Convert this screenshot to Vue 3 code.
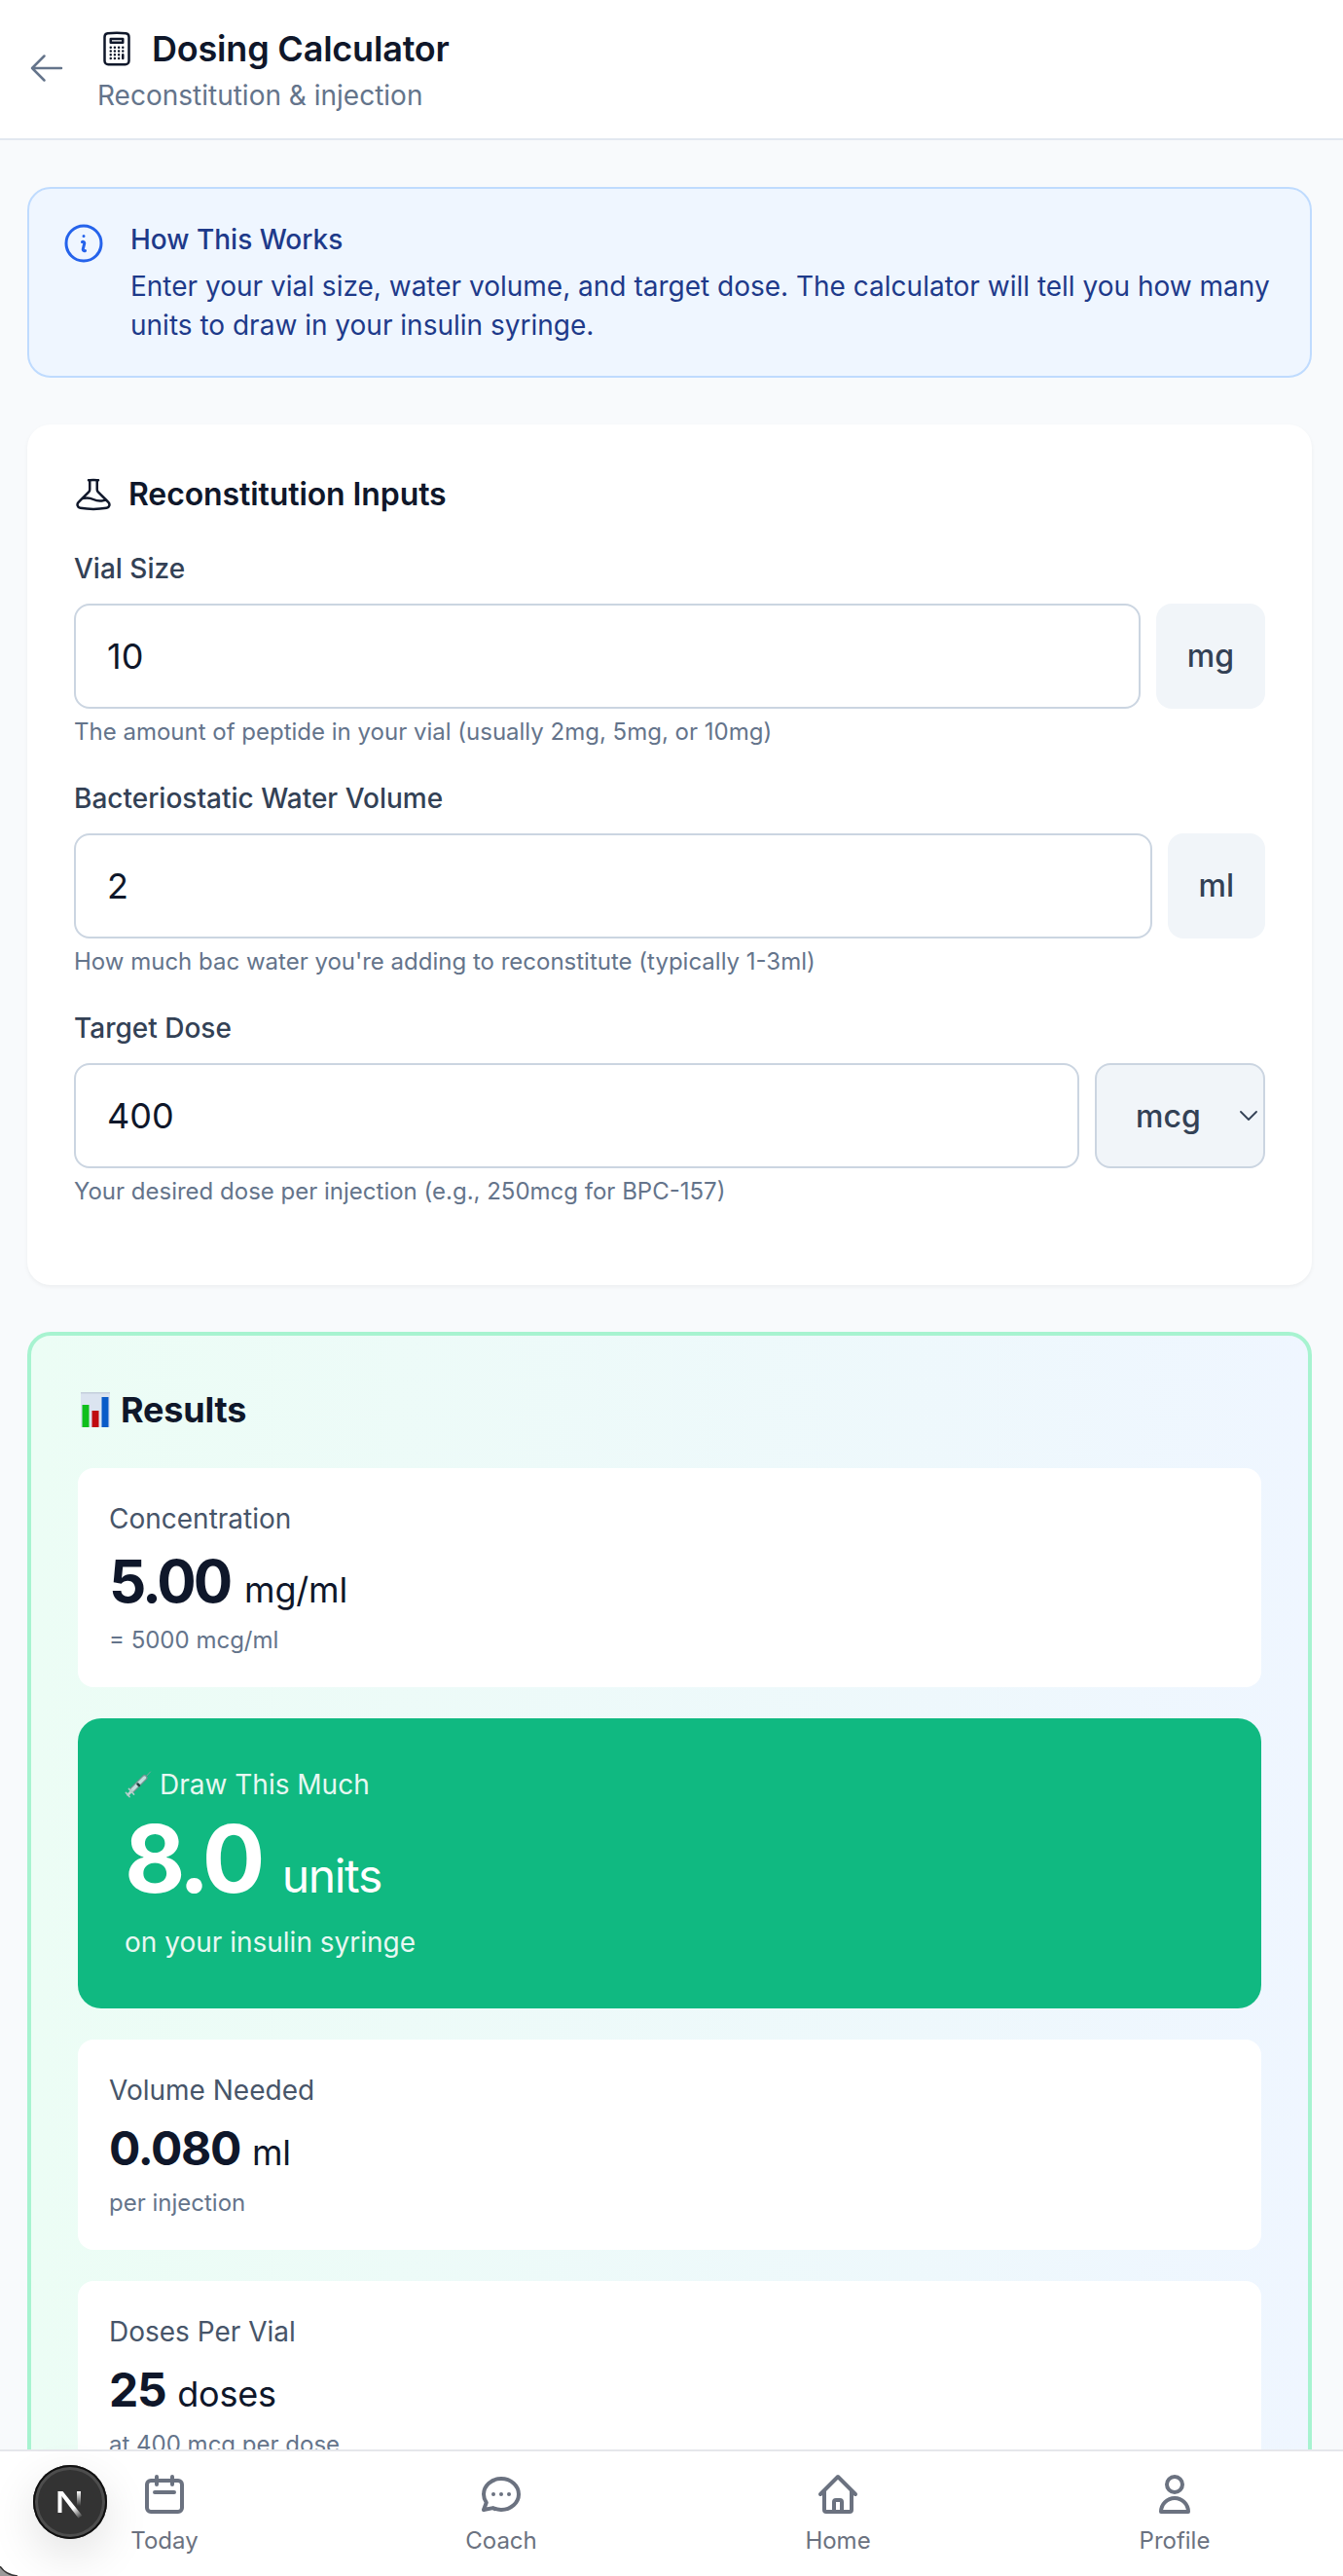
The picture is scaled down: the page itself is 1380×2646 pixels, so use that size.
<template>
  <div class="page">
    <header class="header">
      <button class="back" type="button" aria-label="Back">
        <svg class="icon-md" viewBox="0 0 24 24" stroke-width="1.5" aria-hidden="true">
          <path d="M10.5 19.5 3 12m0 0 7.5-7.5M3 12h18" />
        </svg>
      </button>
      <div>
        <h1 class="title">
          <svg class="icon-md" viewBox="0 0 24 24" stroke-width="1.5" aria-hidden="true">
            <path
              d="M15.75 15.75V18m-7.5-6.75h.008v.008H8.25v-.008Zm0 2.25h.008v.008H8.25V13.5Zm0 2.25h.008v.008H8.25v-.008Zm0 2.25h.008v.008H8.25V18Zm2.498-6.75h.007v.008h-.007v-.008Zm0 2.25h.007v.008h-.007V13.5Zm0 2.25h.007v.008h-.007v-.008Zm0 2.25h.007v.008h-.007V18Zm2.504-6.75h.008v.008h-.008v-.008Zm0 2.25h.008v.008h-.008V13.5Zm0 2.25h.008v.008h-.008v-.008Zm0 2.25h.008v.008h-.008V18Zm2.498-6.75h.008v.008h-.008v-.008Zm0 2.25h.008v.008h-.008V13.5ZM8.25 6h7.5v2.25h-7.5V6ZM12 2.25c-1.892 0-3.758.11-5.593.322C5.307 2.7 4.5 3.65 4.5 4.757V19.5a2.25 2.25 0 0 0 2.25 2.25h10.5a2.25 2.25 0 0 0 2.25-2.25V4.757c0-1.108-.806-2.057-1.907-2.185A48.507 48.507 0 0 0 12 2.25Z"
            />
          </svg>
          <span>Dosing Calculator</span>
        </h1>
        <p class="subtitle">Reconstitution &amp; injection</p>
      </div>
    </header>

    <main class="content">
      <section class="info">
        <svg class="icon-lg" viewBox="0 0 24 24" stroke-width="1.5" aria-hidden="true">
          <path
            d="m11.25 11.25.041-.02a.75.75 0 0 1 1.063.852l-.708 2.836a.75.75 0 0 0 1.063.853l.041-.021M21 12a9 9 0 1 1-18 0 9 9 0 0 1 18 0Zm-9-3.75h.008v.008H12V8.25Z"
          />
        </svg>
        <div>
          <p class="info-title">How This Works</p>
          <p class="info-text">
            Enter your vial size, water volume, and target dose. The calculator will tell you how
            many units to draw in your insulin syringe.
          </p>
        </div>
      </section>

      <section class="card">
        <h2 class="card-title">
          <svg class="icon-md" viewBox="0 0 24 24" stroke-width="1.5" aria-hidden="true">
            <path
              d="M9.75 3.104v5.714a2.25 2.25 0 0 1-.659 1.591L5 14.5M9.75 3.104c-.251.023-.501.05-.75.082m.75-.082a24.301 24.301 0 0 1 4.5 0m0 0v5.714c0 .597.237 1.17.659 1.591L19.8 15.3M14.25 3.104c.251.023.501.05.75.082M19.8 15.3l-1.57.393A9.065 9.065 0 0 1 12 15a9.065 9.065 0 0 0-6.23-.693L5 14.5m14.8.8 1.402 1.402c1.232 1.232.65 3.318-1.067 3.611A48.309 48.309 0 0 1 12 21c-2.773 0-5.491-.235-8.135-.687-1.718-.293-2.3-2.379-1.067-3.61L5 14.5"
            />
          </svg>
          <span>Reconstitution Inputs</span>
        </h2>

        <div class="field">
          <label class="label" for="vial">Vial Size</label>
          <div class="row">
            <input id="vial" v-model="vialMg" class="input" type="text" inputmode="decimal" />
            <span class="unit">mg</span>
          </div>
          <p class="hint">The amount of peptide in your vial (usually 2mg, 5mg, or 10mg)</p>
        </div>

        <div class="field">
          <label class="label" for="water">Bacteriostatic Water Volume</label>
          <div class="row">
            <input id="water" v-model="waterMl" class="input" type="text" inputmode="decimal" />
            <span class="unit">ml</span>
          </div>
          <p class="hint">How much bac water you're adding to reconstitute (typically 1-3ml)</p>
        </div>

        <div class="field">
          <label class="label" for="dose">Target Dose</label>
          <div class="row">
            <input id="dose" v-model="dose" class="input" type="text" inputmode="decimal" />
            <button class="unit unit-select" type="button" @click="toggleUnit">
              <span>{{ doseUnit }}</span>
              <svg class="chevron" viewBox="0 0 18 10" stroke-width="1.8" aria-hidden="true">
                <path d="M1 1l8 8 8-8" />
              </svg>
            </button>
          </div>
          <p class="hint">Your desired dose per injection (e.g., 250mcg for BPC-157)</p>
        </div>
      </section>

      <section class="results">
        <h2 class="results-title">
          <svg class="chart" viewBox="0 0 30 36" aria-hidden="true">
            <rect width="30" height="36" fill="#dbe4f0" />
            <rect width="30" height="1.5" fill="#c3cedb" />
            <rect x="1.5" y="13" width="7" height="23" fill="#0fbf1c" />
            <rect x="11.5" y="19" width="7" height="17" fill="#c00a10" />
            <rect x="21.5" y="5" width="7" height="31" fill="#0a5bc8" />
          </svg>
          <span>Results</span>
        </h2>

        <div class="result">
          <p class="result-label">Concentration</p>
          <p class="value value-lg">
            <span class="number">{{ concentration.toFixed(2) }}</span>
            <span class="value-unit"> mg/ml</span>
          </p>
          <p class="hint">= {{ (concentration * 1000).toFixed(0) }} mcg/ml</p>
        </div>

        <div class="draw">
          <p class="draw-label">
            <svg class="syringe" viewBox="0 0 28 28" aria-hidden="true">
              <path d="M19 9l7.500-8" stroke="#8fa3a6" stroke-width="1" />
              <path d="M8 19.500L20.500 7" stroke="#7c9095" stroke-width="6" />
              <path d="M8 19.500L20.500 7" stroke="#d5e4e8" stroke-width="3.500" />
              <path d="M13.500 13.500l1.500 1.500" stroke="#26383c" stroke-width="2.500" />
              <path d="M3.500 24.500L8 20" stroke="#cfd8da" stroke-width="2.500" />
              <path d="M1.500 22.500l3.500 4M4.500 18.500l5 5.500" stroke="#c3ced0" stroke-width="1.800" />
            </svg>
            <span>Draw This Much</span>
          </p>
          <p class="draw-value">
            <span class="number">{{ units.toFixed(1) }}</span>
            <span class="draw-unit"> units</span>
          </p>
          <p class="draw-note">on your insulin syringe</p>
        </div>

        <div class="result">
          <p class="result-label">Volume Needed</p>
          <p class="value">
            <span class="number">{{ volume.toFixed(3) }}</span>
            <span class="value-unit"> ml</span>
          </p>
          <p class="hint">per injection</p>
        </div>

        <div class="result">
          <p class="result-label">Doses Per Vial</p>
          <p class="value">
            <span class="number">{{ dosesPerVial }}</span>
            <span class="value-unit"> doses</span>
          </p>
          <p class="hint">at {{ dose }} {{ doseUnit }} per dose</p>
        </div>
      </section>
    </main>

    <nav class="nav">
      <a v-for="tab in tabs" :key="tab.name" class="tab" href="#">
        <svg class="icon-lg" viewBox="0 0 24 24" stroke-width="2" aria-hidden="true">
          <path :d="tab.icon" />
        </svg>
        <span>{{ tab.name }}</span>
      </a>
    </nav>

    <!-- Dev tools badge -->
    <div class="badge">
      <svg viewBox="0 0 76 76" aria-hidden="true">
        <defs>
          <linearGradient id="fadeDiag" gradientUnits="userSpaceOnUse" x1="42" y1="44" x2="50" y2="54">
            <stop stop-color="#fff" />
            <stop offset="1" stop-color="#fff" stop-opacity="0" />
          </linearGradient>
          <linearGradient id="fadeBar" gradientUnits="userSpaceOnUse" x1="47" y1="27" x2="47" y2="42">
            <stop stop-color="#fff" />
            <stop offset="1" stop-color="#fff" stop-opacity="0" />
          </linearGradient>
        </defs>
        <rect x="25.500" y="27" width="4" height="22" fill="#fff" />
        <polygon points="25.5,27 30.5,27 50.500,52 46.500,54.500" fill="url(#fadeDiag)" />
        <rect x="45" y="27" width="4" height="15" fill="url(#fadeBar)" />
      </svg>
    </div>

    <svg class="corner" viewBox="0 0 18 10" aria-hidden="true">
      <path class="corner-fill" d="M0 0Q6 9 18 10H0Z" />
      <path d="M0 0Q6 9 18 10" stroke="#333" stroke-width="1.500" />
    </svg>
  </div>
</template>

<script setup>
import { computed, ref } from "vue";

const vialMg = ref("10");
const waterMl = ref("2");
const dose = ref("400");
const doseUnit = ref("mcg");

const doseMg = computed(() =>
  doseUnit.value === "mcg" ? Number(dose.value) / 1000 : Number(dose.value)
);
const concentration = computed(() => Number(vialMg.value) / Number(waterMl.value));
const volume = computed(() => doseMg.value / concentration.value);
// U-100 syringe: 100 units per ml
const units = computed(() => volume.value * 100);
const dosesPerVial = computed(() => Math.round(Number(vialMg.value) / doseMg.value));

function toggleUnit() {
  doseUnit.value = doseUnit.value === "mcg" ? "mg" : "mcg";
}

const tabs = [
  {
    name: "Today",
    icon: "M8 7V3m8 4V3m-9 8h10M5 21h14a2 2 0 002-2V7a2 2 0 00-2-2H5a2 2 0 00-2 2v12a2 2 0 002 2z",
  },
  {
    name: "Coach",
    icon: "M8 12h.01M12 12h.01M16 12h.01M21 12c0 4.418-4.03 8-9 8a9.863 9.863 0 01-4.255-.949L3 20l1.395-3.72C3.512 15.042 3 13.574 3 12c0-4.418 4.03-8 9-8s9 3.582 9 8z",
  },
  {
    name: "Home",
    icon: "M3 12l2-2m0 0l7-7 7 7M5 10v10a1 1 0 001 1h3m10-11l2 2m-2-2v10a1 1 0 01-1 1h-3m-6 0a1 1 0 001-1v-4a1 1 0 011-1h2a1 1 0 011 1v4a1 1 0 001 1m-6 0h6",
  },
  {
    name: "Profile",
    icon: "M16 7a4 4 0 11-8 0 4 4 0 018 0zM12 14a7 7 0 00-7 7h14a7 7 0 00-7-7z",
  },
];
</script>

<style>
body {
  background: #f8fafc;
}
</style>

<style scoped>
* {
  box-sizing: border-box;
}

.page {
  position: relative;
  display: flex;
  flex-direction: column;
  height: 2646px;
  overflow: hidden;
  background: #f8fafc;
  color: #0f172a;
  font-family: Inter, "Liberation Sans", sans-serif;
  font-size: 28px;
  line-height: 40px;
}

h1,
h2,
p {
  margin: 0;
}

button,
input {
  font-family: inherit;
}

svg {
  display: block;
  flex-shrink: 0;
}

svg path {
  fill: none;
  stroke-linecap: round;
  stroke-linejoin: round;
}

.icon-md,
.icon-lg,
.chevron {
  stroke: currentColor;
}

.icon-md {
  width: 40px;
  height: 40px;
}

.icon-lg {
  width: 48px;
  height: 48px;
}

.header {
  display: flex;
  flex-shrink: 0;
  align-items: center;
  gap: 32px;
  height: 144px;
  padding: 0 28px 2px;
  background: #fff;
  border-bottom: 2px solid #e2e8f0;
}

.back {
  padding: 0;
  color: #64748b;
  background: none;
  border: 0;
}

.title {
  display: flex;
  align-items: center;
  gap: 16px;
  font-size: 36px;
  font-weight: 600;
  line-height: 56px;
  letter-spacing: -0.2px;
}

.subtitle {
  color: #64748b;
}

.content {
  flex: 1;
  min-height: 0;
  padding: 48px 32px 0 28px;
  overflow: hidden;
}

.info {
  display: flex;
  gap: 24px;
  padding: 32px;
  color: #1e3a8a;
  background: #eff6ff;
  border: 2px solid #bfdbfe;
  border-radius: 24px;
}

.info .icon-lg {
  color: #2563eb;
}

.info-title {
  font-weight: 500;
}

.info-text {
  margin-top: 8px;
}

.card {
  margin-top: 48px;
  padding: 48px;
  background: #fff;
  border-radius: 24px;
  box-shadow: 0 2px 4px rgba(0, 0, 0, 0.05);
}

.card-title {
  display: flex;
  align-items: center;
  gap: 16px;
  margin-bottom: 32px;
  font-size: 32px;
  font-weight: 600;
  line-height: 48px;
  letter-spacing: -0.1px;
}

.field {
  margin-bottom: 32px;
}

.label {
  display: block;
  margin-bottom: 16px;
  color: #334155;
  font-weight: 500;
}

.row {
  display: flex;
  gap: 16px;
}

.input {
  flex: 1;
  min-width: 0;
  height: 108px;
  padding: 24px 32px;
  color: #0f172a;
  font-size: 36px;
  line-height: 56px;
  background: #fff;
  border: 2px solid #cbd5e1;
  border-radius: 16px;
  outline: none;
}

.unit {
  display: flex;
  align-items: center;
  padding: 0 32px;
  color: #334155;
  font-size: 32px;
  font-weight: 500;
  background: #f1f5f9;
  border-radius: 16px;
}

.unit-select {
  justify-content: space-between;
  width: 175px;
  padding: 0 6px 0 40px;
  border: 2px solid #cbd5e1;
}

.chevron {
  width: 18px;
  height: 10px;
}

.hint {
  margin-top: 8px;
  color: #64748b;
  font-size: 24px;
  line-height: 32px;
}

.results {
  display: flex;
  flex-direction: column;
  gap: 32px;
  margin-top: 48px;
  padding: 48px 48px 80px;
  background: linear-gradient(to right, #ecfdf5, #eff6ff);
  border: 4px solid #a7f3d0;
  border-radius: 24px;
}

.results-title {
  display: flex;
  align-items: center;
  gap: 11px;
  padding-left: 3px;
  font-size: 36px;
  font-weight: 700;
  line-height: 56px;
  letter-spacing: -0.2px;
}

.chart {
  width: 30px;
  height: 36px;
}

.result {
  padding: 32px;
  background: #fff;
  border-radius: 16px;
}

.result-label {
  color: #475569;
}

.value {
  height: 64px;
  margin-top: 8px;
  font-size: 48px;
  font-weight: 700;
  line-height: 64px;
}

.value .number {
  margin-right: 2px;
  letter-spacing: -1.3px;
}

.value-lg {
  height: 73px;
  font-size: 60px;
  line-height: 72px;
}

.value-lg .number {
  margin-right: 5px;
  letter-spacing: -3px;
}

.value-unit {
  font-size: 36px;
  font-weight: 400;
  letter-spacing: -0.2px;
}

.draw {
  padding: 48px;
  color: #fff;
  background: #10b981;
  border-radius: 24px;
}

.draw-label {
  display: flex;
  align-items: center;
  gap: 8px;
  opacity: 0.9;
}

.syringe {
  width: 28px;
  height: 28px;
}

.draw-value {
  height: 98px;
  margin-top: 8px;
  font-size: 96px;
  font-weight: 700;
  line-height: 96px;
}

.draw-value .number {
  margin-right: 10px;
  letter-spacing: -5px;
}

.draw-unit {
  font-size: 48px;
  font-weight: 400;
  letter-spacing: -1.3px;
}

.draw-note {
  margin-top: 16px;
  opacity: 0.9;
}

.nav {
  display: grid;
  flex-shrink: 0;
  grid-template-columns: repeat(4, 1fr);
  height: 130px;
  margin-left: -4px;
  padding-top: 20px;
  background: #fff;
  border-top: 2px solid #e5e7eb;
}

.tab {
  display: flex;
  flex-direction: column;
  align-items: center;
  gap: 8px;
  color: #6b7280;
  font-size: 24px;
  line-height: 32px;
  text-decoration: none;
}

.badge {
  position: absolute;
  bottom: 38px;
  left: 34px;
  width: 76px;
  height: 76px;
  background: #333;
  border-radius: 50%;
  box-shadow:
    inset 0 0 0 2px #111,
    inset 0 0 0 5px #4d4d4d,
    0 16px 48px rgba(0, 0, 0, 0.12);
}

.corner {
  position: absolute;
  bottom: 0;
  left: 0;
  width: 18px;
  height: 10px;
}

.corner .corner-fill {
  fill: #9a9a9a;
}
</style>
